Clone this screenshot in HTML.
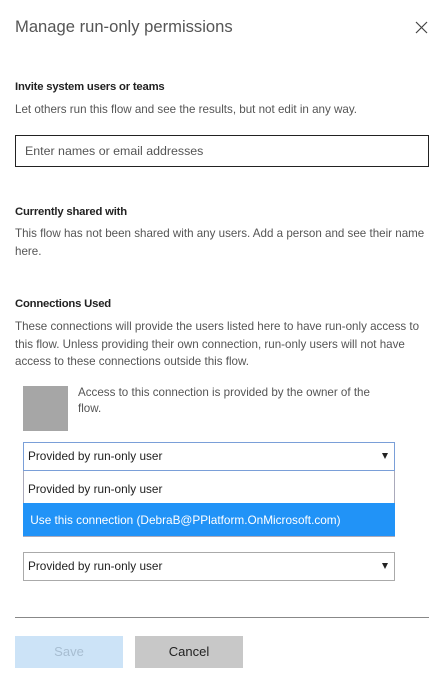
<!DOCTYPE html>
<html><head><style>
body{margin:0;width:443px;height:684px;background:#fff;font-family:"Liberation Sans",sans-serif;position:relative;overflow:hidden;color:#444}
.a{position:absolute;white-space:nowrap}
.h{font-size:11.3px;color:#222;font-weight:bold;letter-spacing:-0.2px}
.t{font-size:11.6px;color:#555;line-height:17.5px}
.box{position:absolute;box-sizing:border-box}
.sel{font-size:11.8px;color:#222;line-height:26px;padding-left:4px}
.arr{position:absolute;right:6px;top:10px;width:0;height:0;border-left:3.5px solid transparent;border-right:3.5px solid transparent;border-top:6px solid #222}
</style></head><body>
<div class="a" style="left:15px;top:17px;font-size:16.6px;color:#555">Manage run-only permissions</div>
<svg class="a" style="left:415px;top:21px" width="13" height="13"><path d="M1 1L12 12M12 1L1 12" stroke="#444" stroke-width="1.2"/></svg>
<div class="a h" style="left:15px;top:81px">Invite system users or teams</div>
<div class="a t" style="left:15px;top:101px">Let others run this flow and see the results, but not edit in any way.</div>
<div class="box" style="left:15px;top:135px;width:414px;height:32px;border:1px solid #222"></div>
<div class="a" style="left:25px;top:144px;font-size:12.4px;color:#555">Enter names or email addresses</div>
<div class="a h" style="left:15px;top:206px">Currently shared with</div>
<div class="a t" style="left:15px;top:225px">This flow has not been shared with any users. Add a person and see their name<br>here.</div>
<div class="a h" style="left:15px;top:298px">Connections Used</div>
<div class="a t" style="left:15px;top:318px">These connections will provide the users listed here to have run-only access to<br>this flow. Unless providing their own connection, run-only users will not have<br>access to these connections outside this flow.</div>
<div class="box" style="left:23px;top:386px;width:45px;height:45px;background:#a6a6a6"></div>
<div class="a t" style="left:78px;top:385px;line-height:16px">Access to this connection is provided by the owner of the<br>flow.</div>
<div class="box sel" style="left:23px;top:442px;width:372px;height:29px;border:1px solid #7a9fd8">Provided by run-only user<div class="arr"></div></div>
<div class="box" style="left:23px;top:471px;width:372px;height:66px;border:1px solid #aab;border-top:none;background:#fff">
<div class="sel" style="height:32px;line-height:36px;padding-left:4px">Provided by run-only user</div>
<div class="sel" style="height:33px;line-height:34px;background:#2193f7;color:#fff;margin:0 -1px">&nbsp;Use this connection (DebraB@PPlatform.OnMicrosoft.com)</div>
</div>
<div class="box sel" style="left:23px;top:552px;width:372px;height:29px;border:1px solid #aaa">Provided by run-only user<div class="arr"></div></div>
<div class="box" style="left:15px;top:617px;width:414px;height:1px;background:#888"></div>
<div class="box" style="left:15px;top:636px;width:108px;height:32px;background:#cce3f7;color:#a7bdd1;font-size:13px;text-align:center;line-height:32px">Save</div>
<div class="box" style="left:135px;top:636px;width:108px;height:32px;background:#c8c8c8;color:#222;font-size:13px;text-align:center;line-height:32px">Cancel</div>
</body></html>
